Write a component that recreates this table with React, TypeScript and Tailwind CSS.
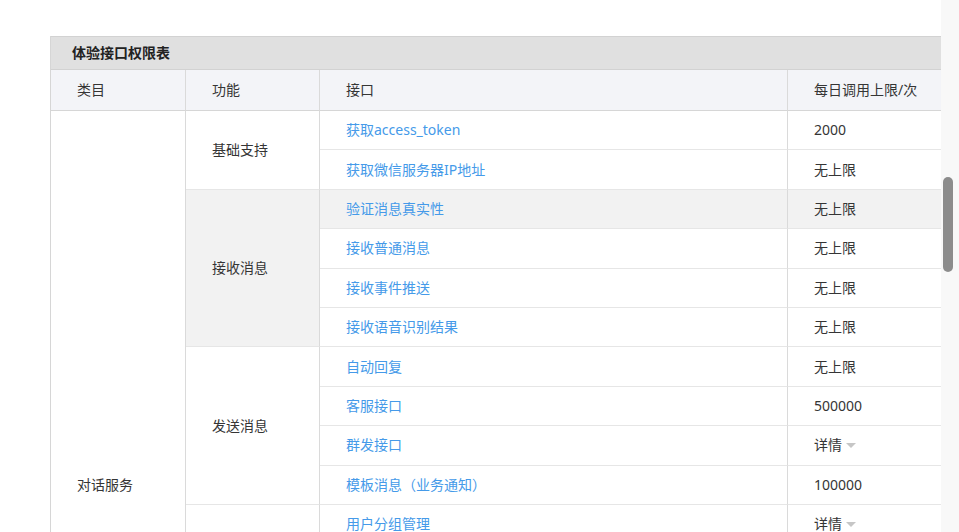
import React from 'react';

type Row = { api: string; limit: string; detail?: boolean };
type Group = { name: string; rows: Row[] };

const groups: Group[] = [
  {
    name: '基础支持',
    rows: [
      { api: '获取access_token', limit: '2000' },
      { api: '获取微信服务器IP地址', limit: '无上限' },
    ],
  },
  {
    name: '接收消息',
    rows: [
      { api: '验证消息真实性', limit: '无上限' },
      { api: '接收普通消息', limit: '无上限' },
      { api: '接收事件推送', limit: '无上限' },
      { api: '接收语音识别结果', limit: '无上限' },
    ],
  },
  {
    name: '发送消息',
    rows: [
      { api: '自动回复', limit: '无上限' },
      { api: '客服接口', limit: '500000' },
      { api: '群发接口', limit: '详情', detail: true },
      { api: '模板消息（业务通知）', limit: '100000' },
    ],
  },
  {
    name: '用户管理',
    rows: [
      { api: '用户分组管理', limit: '详情', detail: true },
      { api: '设置用户备注名', limit: '10000' },
      { api: '获取用户基本信息', limit: '5000000' },
      { api: '获取用户列表', limit: '500' },
      { api: '获取用户地理位置', limit: '无上限' },
      { api: '网页授权获取用户基本信息', limit: '无上限' },
    ],
  },
  {
    name: '推广支持',
    rows: [
      { api: '生成带参数二维码', limit: '100000' },
      { api: '长链接转短链接接口', limit: '1000' },
    ],
  },
  {
    name: '界面丰富',
    rows: [{ api: '自定义菜单', limit: '详情', detail: true }],
  },
];

const spanClass: Record<number, string> = {
  1: 'row-span-1',
  2: 'row-span-2',
  4: 'row-span-4',
  6: 'row-span-6',
};

const cell = 'flex items-center pl-[26px] border-r border-b border-r-[#dadada] border-b-[#e6e6e6]';

const App: React.FC = () => {
  // the first row of 接收消息 is under the mouse in the screenshot
  const hoverApi = '验证消息真实性';
  const total = groups.reduce((n, g) => n + g.rows.length, 0);

  return (
    <div className="flex w-[959px] h-[532px] overflow-hidden bg-white text-[14px] leading-none text-[#353535] font-['Noto_Sans','Noto_Sans_CJK_SC',sans-serif]">
      <div className="w-[941px] shrink-0 overflow-hidden pt-[36px] pl-[50px]">
        <div className="w-[938px] border-l border-[#d6d6d6]">
          {/* Title */}
          <div className="h-[34px] flex items-center pl-[21px] bg-[#e0e0e0] border-y border-[#d2d2d2] font-bold text-[#222]">
            体验接口权限表
          </div>

          <div className="grid grid-cols-[135px_134px_468px_200px] grid-rows-[41px] auto-rows-[39.4px]">
            {/* Header */}
            {['类目', '功能', '接口', '每日调用上限/次'].map((h) => (
              <div key={h} className="flex items-center pl-[26px] bg-[#f3f4f8] border-r border-b border-r-[#dadada] border-b-[#d6d6d6]">
                {h}
              </div>
            ))}

            <div className={`${cell} row-span-[19] bg-white`} style={{ gridRow: `2 / span ${total}` }}>
              对话服务
            </div>

            {groups.map((g, gi) => (
              <React.Fragment key={g.name}>
                {g.rows.map((r, ri) => {
                  const hover = r.api === hoverApi;
                  const groupHover = g.rows[0].api === hoverApi && ri === 0;
                  return (
                    <React.Fragment key={r.api}>
                      {ri === 0 && (
                        <div className={`${cell} col-start-2 ${spanClass[g.rows.length]} ${groupHover ? 'bg-[#f2f2f2]' : 'bg-white'}`}>
                          {g.name}
                        </div>
                      )}
                      <div className={`${cell} col-start-3 text-[#459ae9] ${hover ? 'bg-[#f2f2f2]' : ''}`}>{r.api}</div>
                      <div className={`${cell} col-start-4 ${hover ? 'bg-[#f2f2f2]' : ''}`}>
                        {r.limit}
                        {r.detail && (
                          <span className="ml-[4px] mt-[1px] w-0 h-0 border-x-[5px] border-x-transparent border-t-[5px] border-t-[#c6c6c6]" />
                        )}
                      </div>
                    </React.Fragment>
                  );
                })}
                {gi < 0 && null}
              </React.Fragment>
            ))}
          </div>
        </div>
      </div>

      {/* Scrollbar */}
      <div className="w-[18px] shrink-0 bg-[#f8f8f8] pt-[177px] pl-[2px]">
        <div className="w-[10px] h-[95px] rounded-full bg-[#8c8c8c]" />
      </div>
    </div>
  );
};

export default App;
